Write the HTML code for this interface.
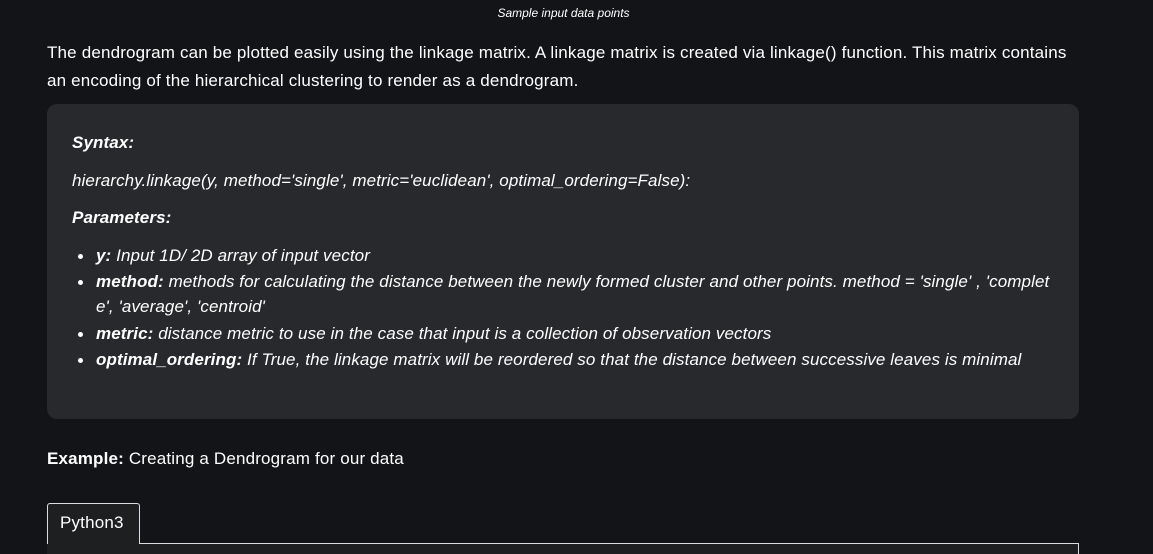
<!DOCTYPE html>
<html><head><meta charset="utf-8"><style>
body{margin:0;width:1153px;height:554px;overflow:hidden;background:#131417;color:#fff;font-family:"Liberation Sans Narrow","Liberation Sans",sans-serif;position:relative}
.a{position:absolute;white-space:nowrap}
.cap{left:0;width:1127px;text-align:center;top:6px;font-size:12px;font-style:italic}
.p{left:47px;font-size:17px;letter-spacing:0.17px}
.box{position:absolute;left:47px;top:104px;width:1032px;height:315px;background:#28292c;border-radius:10px}
.i{font-style:italic;font-size:17px;letter-spacing:0.1px}
.b{font-weight:bold}
.dot{position:absolute;left:78px;width:5px;height:5px;border-radius:50%;background:#fff}
.tab{position:absolute;left:47px;top:503px;width:93px;height:41px;border:1px solid #ddd;border-bottom:none;border-radius:3px 3px 0 0;background:#1e1f21;box-sizing:border-box}
.line{position:absolute;left:140px;top:543px;width:939px;height:1px;background:#ddd}
.rb{position:absolute;left:1078px;top:543px;width:1px;height:11px;background:#ddd}
.cb{position:absolute;left:47px;top:544px;width:1031px;height:10px;background:#1e1f21}
</style></head><body>
<div class="a cap">Sample input data points</div>
<div class="a p" style="top:43px">The dendrogram can be plotted easily using the linkage matrix. A linkage matrix is created via linkage() function. This matrix contains</div>
<div class="a p" style="top:71px">an encoding of the hierarchical clustering to render as a dendrogram.</div>
<div class="box"></div>
<div class="a i b" style="left:72px;top:133px">Syntax:</div>
<div class="a i" style="left:72px;top:171px">hierarchy.linkage(y, method='single', metric='euclidean', optimal_ordering=False):</div>
<div class="a i b" style="left:72px;top:208px">Parameters:</div>
<div class="dot" style="top:254px"></div>
<div class="a i" style="left:96px;top:246px"><b>y:</b> Input 1D/ 2D array of input vector</div>
<div class="dot" style="top:280px"></div>
<div class="a i" style="left:96px;top:272px"><b>method:</b> methods for calculating the distance between the newly formed cluster and other points. method = 'single' , 'complet</div>
<div class="a i" style="left:96px;top:297px">e', 'average', 'centroid'</div>
<div class="dot" style="top:332px"></div>
<div class="a i" style="left:96px;top:324px"><b>metric:</b> distance metric to use in the case that input is a collection of observation vectors</div>
<div class="dot" style="top:358px"></div>
<div class="a i" style="left:96px;top:350px"><b>optimal_ordering:</b> If True, the linkage matrix will be reordered so that the distance between successive leaves is minimal</div>
<div class="a p" style="top:449px"><b>Example:</b> Creating a Dendrogram for our data</div>
<div class="cb"></div>
<div class="tab"></div>
<div class="a p" style="left:60px;top:513px">Python3</div>
<div class="line"></div><div class="rb"></div>
</body></html>
